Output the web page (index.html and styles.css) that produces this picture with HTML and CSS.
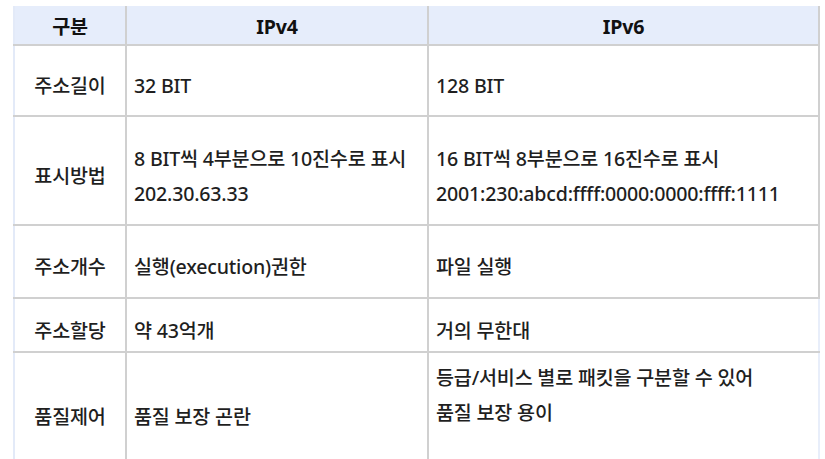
FILE: index.html
```html
<!DOCTYPE html>
<html lang="ko">
<head>
<meta charset="utf-8">
<title>IPv4 / IPv6</title>
<link rel="stylesheet" href="styles.css">
</head>
<body>
<table class="cmp">
  <colgroup>
    <col class="c-key">
    <col class="c-v4">
    <col class="c-v6">
  </colgroup>
  <thead>
    <tr class="r-head">
      <th>구분</th>
      <th>IPv4</th>
      <th>IPv6</th>
    </tr>
  </thead>
  <tbody>
    <tr class="r1">
      <td class="key">주소길이</td>
      <td>32 BIT</td>
      <td class="last">128 BIT</td>
    </tr>
    <tr class="r2">
      <td class="key">표시방법</td>
      <td>8 BIT씩 4부분으로 10진수로 표시<br>202.30.63.33</td>
      <td class="last">16 BIT씩 8부분으로 16진수로 표시<br>2001:230:abcd:ffff:0000:0000:ffff:1111</td>
    </tr>
    <tr class="r3">
      <td class="key">주소개수</td>
      <td>실행(execution)권한</td>
      <td class="last">파일 실행</td>
    </tr>
    <tr class="r4">
      <td class="key">주소할당</td>
      <td>약 43억개</td>
      <td class="last soft">거의 무한대</td>
    </tr>
    <tr class="r5">
      <td class="key">품질제어</td>
      <td>품질 보장 곤란</td>
      <td class="last soft top">등급/서비스 별로 패킷을 구분할 수 있어<br>품질 보장 용이</td>
    </tr>
  </tbody>
</table>
</body>
</html>
```

FILE: styles.css
```css
html, body {
  margin: 0;
  padding: 0;
  background: #ffffff;
}

body {
  font-family: "Noto Sans", "Noto Sans CJK KR", sans-serif;
  font-size: 19.6px;
  font-weight: 500;
  color: #1f1f1f;
  letter-spacing: -0.2px;
}

.cmp {
  margin: 6px 0 0 13px;
  width: 805px;
  border-collapse: collapse;
  table-layout: fixed;
}

.c-key { width: 112px; }
.c-v4 { width: 302px; }
.c-v6 { width: 391px; }

.cmp th,
.cmp td {
  border: 2px solid #d0d0d0;
  padding: 10px 7px 0 7px;
  line-height: 35px;
  vertical-align: middle;
  text-align: left;
  white-space: nowrap;
}

.cmp th:first-child,
.cmp td.key {
  border-left: 2px solid #e3eaf8;
  text-align: center;
}

.cmp thead th {
  background: #e6edfb;
  font-weight: 700;
  text-align: center;
  color: #111111;
  border-top: 0;
  padding-top: 2px;
  line-height: 35px;
}

.r-head { height: 39px; }
.r1 { height: 71px; }
.r2 { height: 109px; }
.r3 { height: 73px; }
.r4 { height: 54px; }
.r5 { height: 118px; }

.cmp td.soft {
  border-right-color: #e8eefa;
}

.cmp td.top {
  vertical-align: top;
  padding-top: 7px;
}

.r5 td {
  border-bottom: 0;
}
```
